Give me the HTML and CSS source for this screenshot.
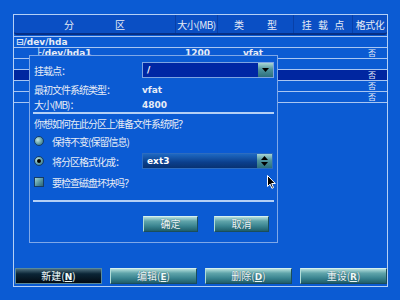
FILE: index.html
```html
<!DOCTYPE html>
<html lang="en">
<head>
    <meta charset="UTF-8">
    <meta name="viewport" content="width=device-width, initial-scale=1.0">
    <title>分区</title>
    <link rel="stylesheet" href="styles.css">
</head>
<body>
    <div class="panel">
        <div class="head">
            <span class="h-part">分<i></i>区</span>
            <span class="h-size">大小(MB)</span>
            <span class="h-type">类<i></i>型</span>
            <span class="h-mount">挂 载 点</span>
            <span class="h-fmt">格式化</span>
        </div>

        <div class="rows">
            <div class="row">
                <span class="c-part">⊟/dev/hda</span>
                <span class="c-size"></span><span class="c-type"></span><span class="c-mount"></span><span class="c-fmt"></span>
            </div>
            <div class="row">
                <span class="c-part sub">├/dev/hda1</span>
                <span class="c-size">1200</span><span class="c-type">vfat</span><span class="c-mount"></span><span class="c-fmt">否</span>
            </div>
            <div class="row">
                <span class="c-part"></span>
                <span class="c-size"></span><span class="c-type"></span><span class="c-mount"></span><span class="c-fmt"></span>
            </div>
            <div class="row selected">
                <span class="c-part"></span>
                <span class="c-size"></span><span class="c-type"></span><span class="c-mount"></span><span class="c-fmt">否</span>
            </div>
            <div class="row">
                <span class="c-part"></span>
                <span class="c-size"></span><span class="c-type"></span><span class="c-mount"></span><span class="c-fmt">否</span>
            </div>
            <div class="row">
                <span class="c-part"></span>
                <span class="c-size"></span><span class="c-type"></span><span class="c-mount"></span><span class="c-fmt">否</span>
            </div>
        </div>

        <!-- 编辑分区对话框 -->
        <div class="dialog">
            <div class="field">
                <span class="label">挂载点：</span>
                <div class="combo">
                    <span class="combo-text">/</span>
                    <span class="combo-btn">
                        <svg width="7" height="4" viewBox="0 0 7 4"><path d="M0 0h7L3.5 4z" fill="#000"/></svg>
                    </span>
                </div>
            </div>
            <div class="field info">
                <span class="label">最初文件系统类型：</span>
                <span class="value">vfat</span>
            </div>
            <div class="field info">
                <span class="label">大小(MB)：</span>
                <span class="value">4800</span>
            </div>

            <div class="sep"></div>

            <p class="question">你想如何在此分区上准备文件系统呢？</p>

            <div class="option">
                <span class="radio"></span>
                <span>保持不变(保留信息)</span>
            </div>
            <div class="option fmt">
                <span class="radio checked"></span>
                <span class="opt-label">将分区格式化成：</span>
                <div class="spin">
                    <span class="combo-text">ext3</span>
                    <span class="spin-btn">
                        <svg width="7" height="4" viewBox="0 0 7 4"><path d="M0 4h7L3.5 0z" fill="#000"/></svg>
                        <svg width="7" height="4" viewBox="0 0 7 4"><path d="M0 0h7L3.5 4z" fill="#000"/></svg>
                    </span>
                </div>
            </div>
            <div class="option check">
                <span class="checkbox"></span>
                <span>要检查磁盘坏块吗？</span>
            </div>

            <div class="sep low"></div>

            <div class="dialog-buttons">
                <button class="btn small">确定</button>
                <button class="btn small">取消</button>
            </div>
        </div>

        <svg class="cursor" width="9" height="14" viewBox="0 0 9 14">
            <path d="M0.5 0.5v11l2.6-2.4 1.8 4.2 1.6-0.7-1.8-4.1h3.6z" fill="#000" stroke="#fff" stroke-width="1"/>
        </svg>

        <div class="actions">
            <button class="btn focus">新建(<u>N</u>)</button>
            <button class="btn">编辑(<u>E</u>)</button>
            <button class="btn">删除(<u>D</u>)</button>
            <button class="btn">重设(<u>R</u>)</button>
        </div>
    </div>
</body>
</html>
```

FILE: styles.css
```css
body {
    margin: 0;
    width: 400px;
    height: 300px;
    background-color: #0b5bd3; /* azul de fondo */
    color: #e6ecf6;
    font-family: "DejaVu Sans", "Noto Sans CJK SC", sans-serif;
    font-size: 10px;
    overflow: hidden;
}

.panel {
    position: relative;
    box-sizing: border-box;
    width: 375px;
    height: 273px;
    margin: 14px 0 0 13px;
    border: 1px solid #b4d0f6;
    display: flex;
    flex-direction: column;
}

/* cabecera de la tabla */
.head {
    display: grid;
    grid-template-columns: 161px 42px 76px 59px 1fr;
    height: 18px;
    background-color: #0a4fc4;
    border-bottom: 2px solid #062f86;
    border-radius: 0 0 3px 3px;
    font-family: "Noto Sans CJK SC", sans-serif;
    font-size: 10px;
    white-space: nowrap;
}

.head span {
    display: flex;
    align-items: center;
    justify-content: center;
    border-left: 1px solid #0840a8;
}

.head span:first-child {
    border-left: none;
}

.head i {
    display: inline-block;
    width: 41px;
}

.h-size {
    letter-spacing: -0.5px;
}

.h-type i {
    width: 23px;
}

.h-mount {
    word-spacing: 4px;
}

.h-fmt {
    letter-spacing: -0.5px;
}

.rows {
    margin-top: 1px;
    border-top: 1px solid #a9c6f2;
}

.row {
    display: grid;
    grid-template-columns: 161px 42px 76px 59px 1fr;
    height: 10px;
    border-bottom: 1px solid #a9c6f2;
    line-height: 10px;
    font-size: 9px;
    font-weight: bold;
    white-space: nowrap;
}

.row.selected {
    background-color: #0026a0;
}

.c-part {
    padding-left: 2px;
}

.c-part.sub {
    padding-left: 22px;
}

.c-size {
    text-align: right;
    padding-right: 7px;
}

.c-type {
    padding-left: 26px;
}

.c-fmt {
    padding-left: 16px;
    font-family: "Noto Sans CJK SC", sans-serif;
    font-size: 8px;
    font-weight: normal;
}

/* dialogo */
.dialog {
    position: absolute;
    left: 15px;
    top: 40px;
    box-sizing: border-box;
    width: 249px;
    height: 188px;
    padding: 6px 3px 0 4px;
    background-color: #0b5bd3;
    border: 1px solid #7fa8e8;
    font-family: "Noto Sans CJK SC", sans-serif;
    letter-spacing: -1px;
    white-space: nowrap;
}

.field {
    display: grid;
    grid-template-columns: 108px 1fr;
    align-items: center;
    height: 16px;
}

.field.info {
    height: 12px;
    margin-top: 4px;
}

.field.info + .field.info {
    margin-top: 3px;
}

.value, .combo-text {
    font-family: "DejaVu Sans", sans-serif;
    font-size: 9px;
    font-weight: bold;
    letter-spacing: 0;
}

.combo {
    display: flex;
    height: 16px;
    box-sizing: border-box;
    border: 1px solid #7ea4e2;
    background-color: #0027a4;
}

.combo-text {
    flex: 1;
    padding-left: 4px;
    line-height: 14px;
    color: #fff;
}

.combo-btn, .spin-btn {
    width: 15px;
    display: flex;
    flex-direction: column;
    align-items: center;
    justify-content: center;
    gap: 2px;
    background: linear-gradient(#a8d6d4, #4f949e 45%, #2c6f7c);
}

.sep {
    height: 2px;
    margin: 3px 0 0 -1px;
    background-color: #b4d0f6;
}

.sep.low {
    margin-top: 12px;
}

.question {
    margin: 4px 0 0;
    height: 12px;
    line-height: 12px;
}

.option {
    display: flex;
    align-items: center;
    height: 12px;
    margin-top: 5px;
}

.option.fmt {
    height: 16px;
    margin-top: 6px;
}

.option.check {
    margin-top: 7px;
}

.radio, .checkbox {
    box-sizing: border-box;
    width: 10px;
    height: 10px;
    margin-right: 8px;
    border: 1px solid #163c66;
    display: flex;
    align-items: center;
    justify-content: center;
}

.radio {
    border-radius: 50%;
    background: radial-gradient(circle at 35% 35%, #c4e6e4, #5e9ea6 55%, #2b5f74);
}

.radio.checked::after {
    content: "";
    width: 4px;
    height: 4px;
    border-radius: 50%;
    background-color: #000;
}

.checkbox {
    background: linear-gradient(135deg, #a2d4d2, #4e8e9a 60%, #2e6478);
}

.opt-label {
    width: 90px;
}

.spin {
    display: flex;
    width: 131px;
    height: 16px;
    box-sizing: border-box;
    border: 1px solid #2d6cc0;
    background: linear-gradient(#1d68c2, #0b3f8c 60%, #083272);
}

.dialog-buttons {
    display: flex;
    justify-content: flex-end;
    gap: 16px;
    margin-top: 14px;
    padding-right: 5px;
}

/* botones */
.btn {
    box-sizing: border-box;
    height: 16px;
    padding: 0;
    border: 1px solid #1a4d5c;
    border-top-color: #d6f0ee;
    border-left-color: #b0dcd8;
    background: linear-gradient(#b4dedb, #5fa4aa 30%, #3a8490 65%, #1f5e6a);
    color: #eef8f8;
    font-family: "Noto Sans CJK SC", sans-serif;
    font-size: 10px;
    line-height: 14px;
    text-shadow: 0 0 1px #245;
}

.btn.small {
    width: 55px;
}

.btn u {
    font-family: "DejaVu Sans", sans-serif;
    font-size: 9px;
    font-weight: bold;
}

.actions {
    margin-top: auto;
    margin-bottom: 2px;
    padding-left: 1px;
    display: flex;
    gap: 8px;
}

.actions .btn {
    width: 87px;
}

.btn.focus {
    border-color: #5a8a9a;
    background: linear-gradient(#4b6c7c, #0b2536 35%, #020a12);
}

.cursor {
    position: absolute;
    left: 253px;
    top: 160px;
}
```
